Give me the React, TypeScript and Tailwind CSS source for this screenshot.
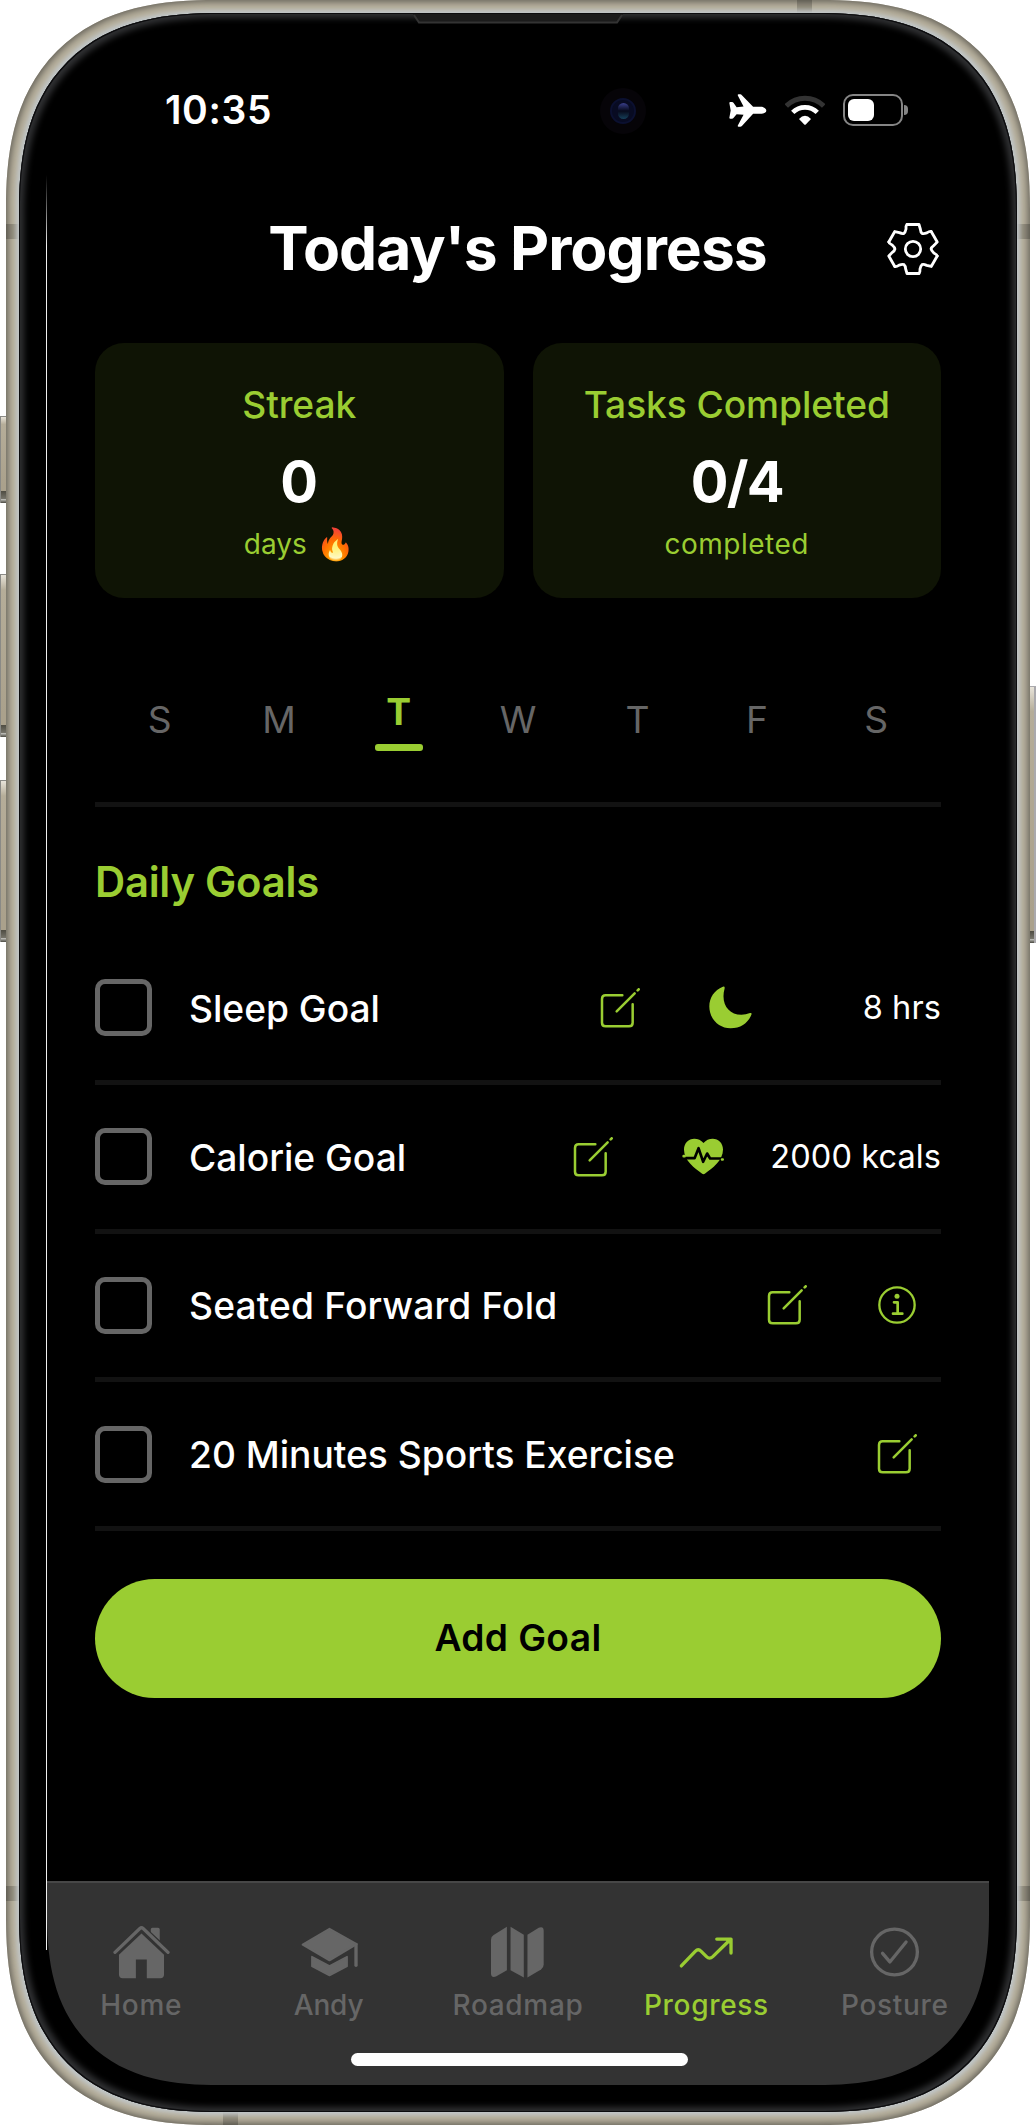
import type { ReactNode } from 'react';

const GREEN = '#9acd32';

function PlaneIcon() {
  return (
    <svg className="h-[33px] w-[38px]" viewBox="640 282 113 100" fill="#fff">
      <path d="M640 309Q640 306 643 306H648Q651 306 653 309L662 322L683 320L666 287Q664 283 668 283H673Q676 283 678 286L712 321H738Q752 324 752 332Q752 340 738 342H712L678 379Q676 381 673 381H668Q664 381 666 377L683 345L662 343L653 354Q651 357 648 357H643Q640 357 640 354L644 332Z" />
    </svg>
  );
}

function WifiIcon() {
  return (
    <svg className="h-[30px] w-[40px]" viewBox="808 285 120 90" fill="none">
      <path d="M811.8 317.8A79.5 79.5 0 0 1 924.2 317.8" stroke="#333" strokeWidth="15" />
      <path d="M831.2 337.2A52 52 0 0 1 904.8 337.2" stroke="#fff" strokeWidth="14" />
      <path d="M850 357Q868 337 886 357L871 373Q868 376 865 373Z" fill="#fff" />
    </svg>
  );
}

function Battery() {
  return (
    <div className="flex items-center gap-[1px]">
      <div className="h-[32px] w-[60px] rounded-[10px] border-2 border-[#858585] p-[3px]">
        <div className="h-[22px] w-[26px] rounded-[6px] bg-white" />
      </div>
      <div className="h-[10px] w-[4px] rounded-r-full bg-[#858585]" />
    </div>
  );
}

function GearIcon() {
  return (
    <svg className="h-[54px] w-[54px]" viewBox="-81 -81 162 162" fill="none" stroke="#fff" strokeWidth="8.5" strokeLinecap="round" strokeLinejoin="round">
      {[0, 60, 120, 180, 240, 300].map((angle) => (
        <path key={angle} transform={`rotate(${angle})`} d="M-18 -73.5H18L22 -60Q23 -50 27 -47Q31.6 -45 41.5 -48.2Q50 -54 54.6 -52.4" />
      ))}
      <circle r="23" />
    </svg>
  );
}

function EditIcon() {
  return (
    <svg className="h-10 w-10" viewBox="120 85 120 120" fill="none" stroke={GREEN} strokeWidth="7.5" strokeLinecap="round">
      <path d="M187 107H137Q126 107 126 118V189Q126 200 137 200H207Q218 200 218 189V134" />
      <path d="M170 155L224 101" />
      <path d="M233 92L236 89" strokeWidth="8" />
    </svg>
  );
}

function MoonIcon() {
  return (
    <svg className="h-[43px] w-[43px]" viewBox="447 80 130 130" fill={GREEN}>
      <path d="M489 82Q496 80 494 88C482 132 505 167 545 167Q558 167 571 162Q578 161 575 167C565 192 543 208 512 208C477 208 448 179 448 142C448 115 463 92 489 82Z" />
    </svg>
  );
}

function HeartIcon() {
  return (
    <svg className="h-[43px] w-[43px]" viewBox="366 526 130 130" fill="none" strokeLinecap="round" strokeLinejoin="round">
      <path d="M427 643C405 627 372 604 372 570C372 550 386 537 403 537Q420 537 431 550Q442 537 459 537C476 537 490 550 490 570C490 604 457 627 435 643Q431 646 427 643Z" fill={GREEN} />
      <path d="M370 596H404L416 566L430 607L442 582L451 597H490" stroke="#000" strokeWidth="8" />
      <path d="M371 590H374M487 600H489" stroke={GREEN} strokeWidth="8" />
    </svg>
  );
}

function InfoIcon() {
  return (
    <svg className="h-10 w-10" viewBox="953 74 120 120" fill="none" stroke={GREEN} strokeWidth="7" strokeLinecap="round" strokeLinejoin="round">
      <circle cx="1013" cy="134" r="53" />
      <path d="M1004 126H1015V160M1001 160H1029" strokeWidth="8" />
      <circle cx="1013" cy="108" r="7.5" fill={GREEN} stroke="none" />
    </svg>
  );
}

function HomeIcon() {
  return (
    <svg className="h-[54px] w-[57px]" viewBox="336 196 172 162" fill="#666">
      <path d="M450 222V209Q450 204 455 204H472Q477 204 477 209V255Z" />
      <path d="M342 278L422 203L502 278" fill="none" stroke="#333" strokeWidth="19" />
      <path d="M342 278L417 206Q422 202 427 206L502 278" fill="none" stroke="#666" strokeWidth="10" strokeLinecap="round" />
      <path d="M422 221L490 285V345Q490 356 479 356H438V300H405V356H365Q354 356 354 345V285Z" />
    </svg>
  );
}

function SchoolIcon() {
  return (
    <svg className="h-[54px] w-[57px]" viewBox="902 196 172 162" fill="#666" stroke="#666" strokeLinejoin="round">
      <path d="M988 207L1070 253L988 302L907 255Z" strokeWidth="6" />
      <path d="M1068 254V317" strokeWidth="10" strokeLinecap="round" />
      <path d="M935 291L988 319L1041 291V320L988 348L935 320Z" strokeWidth="5" />
    </svg>
  );
}

function MapIcon() {
  return (
    <svg className="h-[54px] w-[57px]" viewBox="1470 196 172 162" fill="#666">
      <path d="M1524 201V332L1491 351Q1476 356 1476 341V240Q1476 231 1484 226Z" />
      <path d="M1535 201L1575 225V354L1535 332Z" />
      <path d="M1586 225L1620 204Q1635 199 1635 213V315Q1635 325 1627 330L1586 354Z" />
    </svg>
  );
}

function TrendIcon() {
  return (
    <svg className="h-[54px] w-[57px]" viewBox="486 196 172 162" fill="none" stroke={GREEN} strokeWidth="10" strokeLinecap="round" strokeLinejoin="round">
      <path d="M496 319L538 275Q547 266 556 275L572 291Q581 300 591 291L643 240" />
      <path d="M603 238H646V280" />
      <path d="M632 240H645V252Z" fill={GREEN} strokeWidth="3" />
    </svg>
  );
}

function CheckCircleIcon() {
  return (
    <svg className="h-[54px] w-[57px]" viewBox="1051 196 172 162" fill="none" stroke="#666" strokeWidth="10" strokeLinecap="round" strokeLinejoin="round">
      <circle cx="1137" cy="277" r="69" />
      <path d="M1101 281L1123 307L1172 247" />
    </svg>
  );
}

function StatCard({ title, value, children }: { title: string; value: ReactNode; children: ReactNode }) {
  return (
    <section className="flex h-[255px] flex-1 flex-col items-center rounded-[29px] bg-[#0f1405] pt-[39px]">
      <h2 className="h-[46px] text-[37.2px] leading-[46px] font-medium tracking-[-0.09px] text-[#9acd32]">{title}</h2>
      <p className="mt-5 h-[68px] text-[56px] leading-[68px] font-bold">{value}</p>
      <p className="mt-[10px] flex h-9 items-center leading-9 text-[#9acd32]">{children}</p>
    </section>
  );
}

const DAYS = ['S', 'M', 'T', 'W', 'T', 'F', 'S'];

function Week({ selected }: { selected: number }) {
  return (
    <div className="mt-[82px] grid h-20 grid-cols-7 px-[5px] text-[37.2px]">
      {DAYS.map((day, i) =>
        i === selected ? (
          <div key={i} className="flex flex-col items-center pt-3 font-bold text-[#9acd32]">
            <span className="h-10 leading-10">{day}</span>
            <span className="mt-3 h-[7px] w-12 rounded-[3px] bg-[#9acd32]" />
          </div>
        ) : (
          <div key={i} className="flex items-center justify-center text-[#666]">
            {day}
          </div>
        ),
      )}
    </div>
  );
}

function GoalRow({ label, icons, value, labelClass }: { label: string; icons: ReactNode[]; value?: string; labelClass: string }) {
  return (
    <li className="flex h-[148.75px] items-center border-b-[5px] border-[#121212]">
      <span className="size-[57px] rounded-[10px] border-[5px] border-[#666]" />
      <span className={labelClass}>{label}</span>
      <span className="ml-auto flex items-center gap-[22px]">
        {icons.map((icon, i) => (
          <span key={i} className="flex w-[88px] justify-center">
            {icon}
          </span>
        ))}
      </span>
      {value && <span className="ml-[23px] min-w-[144px] pt-px text-right text-[32.5px] tracking-[0.1px]">{value}</span>}
    </li>
  );
}

const LABEL = 'ml-[37px] pt-[2px] text-[37.2px] font-medium tracking-[-0.02px]';
const LABEL_WIDE = 'ml-[37px] pt-[2px] text-[37.2px] font-medium tracking-[0.12px]';

function Tab({ icon, label, active, tight }: { icon: ReactNode; label: string; active?: boolean; tight?: boolean }) {
  return (
    <div className={active ? 'flex flex-col items-center text-[#9acd32]' : 'flex flex-col items-center text-[#666]'}>
      {icon}
      <span className={tight ? 'mt-[9px] mr-[2px] h-[34px] text-[28px] leading-[34px] font-medium tracking-[-0.2px]' : 'mt-[9px] h-[34px] text-[28px] leading-[34px] font-medium tracking-[0.69px]'}>
        {label}
      </span>
    </div>
  );
}

function SideButton({ place }: { place: string }) {
  return (
    <div className={place}>
      <div className="h-full w-full bg-linear-to-b from-[#e8e4da] via-[#b5ad99] via-10% to-[#aaa18c] to-92%" />
      <div className="h-2 w-full shrink-0 bg-linear-to-b from-[#4e4c42] to-[#77756b]" />
      <div className="h-1 w-full shrink-0 bg-linear-to-b from-[#c9c9c4] to-[#4a4941]" />
    </div>
  );
}

export default function App() {
  return (
    <div className="relative h-[2125px] w-[1036px] overflow-hidden bg-white font-['Inter',sans-serif] text-white">
      {/* Hardware buttons */}
      <SideButton place="absolute top-[416px] left-0 flex h-[87px] w-[7px] flex-col border-t border-l border-[#8a8a86]" />
      <SideButton place="absolute top-[574px] left-0 flex h-[163px] w-[7px] flex-col border-t border-l border-[#8a8a86]" />
      <SideButton place="absolute top-[780px] left-0 flex h-[162px] w-[7px] flex-col border-t border-l border-[#8a8a86]" />
      <SideButton place="absolute top-[686px] right-0 flex h-[257px] w-[8px] flex-col border-t border-r-2 border-[#aaa9ad]" />

      {/* Titanium frame */}
      <div className="relative mx-auto h-[2125px] w-[1024px] overflow-hidden rounded-[210px] bg-[#b7b09d] p-[13px] shadow-[inset_0_0_6px_2px_#66635a] [corner-shape:superellipse(1.316)]">
        <span className="absolute top-[224px] left-0 h-[15px] w-full bg-black/20" />
        <span className="absolute top-[1886px] left-0 h-[15px] w-full bg-black/20" />
        <span className="absolute top-0 left-[791px] h-5 w-[15px] bg-black/20" />
        <span className="absolute bottom-0 left-[217px] h-5 w-[15px] bg-black/20" />

        {/* Glass */}
        <div className="relative flex h-full w-full flex-col items-center rounded-[200px] bg-black pb-[27px] shadow-[0_0_4px_3px_#c0c6c8,inset_0_0_0_1px_#0c0c0e,inset_0_0_6px_5px_#303133] [corner-shape:superellipse(1.316)]">
          <svg className="absolute top-[1px] left-[394px] h-[10px] w-[210px]" viewBox="0 0 210 10">
            <path d="M0 0H210L204 8.5H6Z" fill="#1b1b1b" />
            <path d="M1 1L6 8.5H204L209 1" fill="none" stroke="#333" strokeWidth="2" />
          </svg>
          <div className="absolute top-[75px] left-[581px] flex size-[46px] items-center justify-center rounded-full bg-[#060408]">
            <div className="flex size-[26px] items-center justify-center rounded-full border-2 border-[#0b1030] bg-[#080b22]">
              <div className="h-[16px] w-[11px] rounded-full bg-linear-to-b from-[#3a3f8c] via-[#070a1c] to-[#14405a]" />
            </div>
          </div>
          <div className="absolute top-[162px] left-[27px] h-[1775px] w-px bg-linear-to-b from-transparent via-[#f0f0f0] via-4% to-[#f0f0f0]" />

          {/* Screen */}
          <main className="flex w-[942px] flex-1 flex-col overflow-hidden rounded-b-[172px] [corner-shape:superellipse(1.316)]">
            <header className="flex h-[194px] items-center pr-[81px] pl-[118px]">
              <time className="pt-px text-[39px] font-semibold tracking-[0.63px]">10:35</time>
              <div className="ml-auto flex items-center">
                <PlaneIcon />
                <span className="ml-[18px]"><WifiIcon /></span>
                <span className="ml-[18px]"><Battery /></span>
              </div>
            </header>

            <div className="flex flex-1 flex-col px-12">
              <div className="relative flex h-[83px] items-center justify-center">
                <h1 className="pr-px text-[60.5px] font-bold tracking-[-1px]">Today's Progress</h1>
                <button className="absolute right-[1px]" aria-label="Settings"><GearIcon /></button>
              </div>

              <div className="mt-[53px] flex gap-[29px]">
                <StatCard title="Streak" value="0">
                  <span className="text-[28px]">days</span>
                  <span className="ml-[9px] -mt-px text-[31px]">🔥</span>
                </StatCard>
                <StatCard title="Tasks Completed" value={<span className="tracking-[-1.75px]">0/4</span>}>
                  <span className="text-[28px] tracking-[0.49px]">completed</span>
                </StatCard>
              </div>

              <Week selected={2} />
              <hr className="mt-[42px] h-[5px] shrink-0 border-0 bg-[#121212]" />

              <h2 className="mt-[50px] h-[50px] text-[41.8px] leading-[50px] font-[570] tracking-[-0.25px] text-[#9acd32]">Daily Goals</h2>
              <ul className="mt-[29px]">
                <GoalRow label="Sleep Goal" labelClass={LABEL} icons={[<EditIcon />, <MoonIcon />]} value="8 hrs" />
                <GoalRow label="Calorie Goal" labelClass={LABEL} icons={[<EditIcon />, <HeartIcon />]} value="2000 kcals" />
                <GoalRow label="Seated Forward Fold" labelClass={LABEL_WIDE} icons={[<EditIcon />, <InfoIcon />]} />
                <GoalRow label="20 Minutes Sports Exercise" labelClass={LABEL} icons={[<EditIcon />]} />
              </ul>

              <button className="mt-12 h-[118.5px] rounded-full bg-[#9acd32] text-[37.2px] font-semibold tracking-[0.36px] text-black">Add Goal</button>
            </div>

            <nav className="relative grid h-[204px] grid-cols-5 border-t-2 border-[#474747] bg-[#333] pt-[42px]">
              <Tab icon={<HomeIcon />} label="Home" />
              <Tab icon={<SchoolIcon />} label="Andy" tight />
              <Tab icon={<MapIcon />} label="Roadmap" />
              <Tab icon={<TrendIcon />} label="Progress" active />
              <Tab icon={<CheckCircleIcon />} label="Posture" />
              <span className="absolute bottom-[19px] left-[303.5px] h-[13px] w-[337px] rounded-full bg-white" />
            </nav>
          </main>
        </div>
      </div>
    </div>
  );
}
